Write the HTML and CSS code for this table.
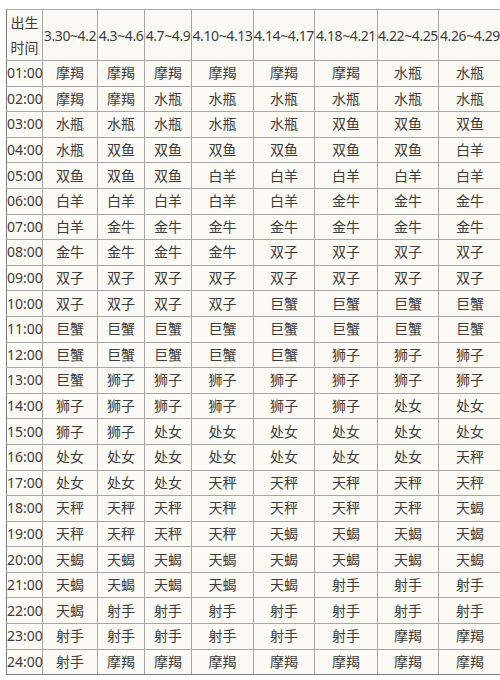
FILE: index.html
```html
<!DOCTYPE html>
<html lang="zh">
<head>
<meta charset="utf-8">
<link rel="stylesheet" href="styles.css">
</head>
<body>
<div class="wrap">
<table class="tbl">
<colgroup>
<col class="c0"><col class="c1"><col class="c2"><col class="c3"><col class="c4"><col class="c5"><col class="c6"><col class="c7"><col class="c8">
</colgroup>
<thead>
<tr class="head"><td>出生<br>时间</td><td class="date">3.30~4.2</td><td class="date">4.3~4.6</td><td class="date">4.7~4.9</td><td class="date">4.10~4.13</td><td class="date">4.14~4.17</td><td class="date">4.18~4.21</td><td class="date">4.22~4.25</td><td class="date">4.26~4.29</td></tr>
</thead>
<tbody>
<tr><td>01:00</td><td>摩羯</td><td>摩羯</td><td>摩羯</td><td>摩羯</td><td>摩羯</td><td>摩羯</td><td>水瓶</td><td>水瓶</td></tr>
<tr><td>02:00</td><td>摩羯</td><td>摩羯</td><td>水瓶</td><td>水瓶</td><td>水瓶</td><td>水瓶</td><td>水瓶</td><td>水瓶</td></tr>
<tr><td>03:00</td><td>水瓶</td><td>水瓶</td><td>水瓶</td><td>水瓶</td><td>水瓶</td><td>双鱼</td><td>双鱼</td><td>双鱼</td></tr>
<tr><td>04:00</td><td>水瓶</td><td>双鱼</td><td>双鱼</td><td>双鱼</td><td>双鱼</td><td>双鱼</td><td>双鱼</td><td>白羊</td></tr>
<tr><td>05:00</td><td>双鱼</td><td>双鱼</td><td>双鱼</td><td>白羊</td><td>白羊</td><td>白羊</td><td>白羊</td><td>白羊</td></tr>
<tr><td>06:00</td><td>白羊</td><td>白羊</td><td>白羊</td><td>白羊</td><td>白羊</td><td>金牛</td><td>金牛</td><td>金牛</td></tr>
<tr><td>07:00</td><td>白羊</td><td>金牛</td><td>金牛</td><td>金牛</td><td>金牛</td><td>金牛</td><td>金牛</td><td>金牛</td></tr>
<tr><td>08:00</td><td>金牛</td><td>金牛</td><td>金牛</td><td>金牛</td><td>双子</td><td>双子</td><td>双子</td><td>双子</td></tr>
<tr><td>09:00</td><td>双子</td><td>双子</td><td>双子</td><td>双子</td><td>双子</td><td>双子</td><td>双子</td><td>双子</td></tr>
<tr><td>10:00</td><td>双子</td><td>双子</td><td>双子</td><td>双子</td><td>巨蟹</td><td>巨蟹</td><td>巨蟹</td><td>巨蟹</td></tr>
<tr><td>11:00</td><td>巨蟹</td><td>巨蟹</td><td>巨蟹</td><td>巨蟹</td><td>巨蟹</td><td>巨蟹</td><td>巨蟹</td><td>巨蟹</td></tr>
<tr><td>12:00</td><td>巨蟹</td><td>巨蟹</td><td>巨蟹</td><td>巨蟹</td><td>巨蟹</td><td>狮子</td><td>狮子</td><td>狮子</td></tr>
<tr><td>13:00</td><td>巨蟹</td><td>狮子</td><td>狮子</td><td>狮子</td><td>狮子</td><td>狮子</td><td>狮子</td><td>狮子</td></tr>
<tr><td>14:00</td><td>狮子</td><td>狮子</td><td>狮子</td><td>狮子</td><td>狮子</td><td>狮子</td><td>处女</td><td>处女</td></tr>
<tr><td>15:00</td><td>狮子</td><td>狮子</td><td>处女</td><td>处女</td><td>处女</td><td>处女</td><td>处女</td><td>处女</td></tr>
<tr><td>16:00</td><td>处女</td><td>处女</td><td>处女</td><td>处女</td><td>处女</td><td>处女</td><td>处女</td><td>天秤</td></tr>
<tr><td>17:00</td><td>处女</td><td>处女</td><td>处女</td><td>天秤</td><td>天秤</td><td>天秤</td><td>天秤</td><td>天秤</td></tr>
<tr><td>18:00</td><td>天秤</td><td>天秤</td><td>天秤</td><td>天秤</td><td>天秤</td><td>天秤</td><td>天秤</td><td>天蝎</td></tr>
<tr><td>19:00</td><td>天秤</td><td>天秤</td><td>天秤</td><td>天秤</td><td>天蝎</td><td>天蝎</td><td>天蝎</td><td>天蝎</td></tr>
<tr><td>20:00</td><td>天蝎</td><td>天蝎</td><td>天蝎</td><td>天蝎</td><td>天蝎</td><td>天蝎</td><td>天蝎</td><td>天蝎</td></tr>
<tr><td>21:00</td><td>天蝎</td><td>天蝎</td><td>天蝎</td><td>天蝎</td><td>天蝎</td><td>射手</td><td>射手</td><td>射手</td></tr>
<tr><td>22:00</td><td>天蝎</td><td>射手</td><td>射手</td><td>射手</td><td>射手</td><td>射手</td><td>射手</td><td>射手</td></tr>
<tr><td>23:00</td><td>射手</td><td>射手</td><td>射手</td><td>射手</td><td>射手</td><td>射手</td><td>摩羯</td><td>摩羯</td></tr>
<tr><td>24:00</td><td>射手</td><td>摩羯</td><td>摩羯</td><td>摩羯</td><td>摩羯</td><td>摩羯</td><td>摩羯</td><td>摩羯</td></tr>
</tbody>
</table>
</div>
</body>
</html>
```

FILE: styles.css
```css
html, body {
  margin: 0;
  padding: 0;
  background: #ffffff;
  overflow: hidden;
}
.wrap {
  padding: 9px 0 0 6px;
  width: 600px;
}
.tbl {
  border-collapse: collapse;
  table-layout: fixed;
  width: 495px;
  background: #fcfaf4;
  font-family: "Noto Sans", "Noto Sans CJK SC", sans-serif;
  font-size: 14px;
  color: #3d3d3d;
  border-left: 1px solid #7d7d7d;
  border-top: 1px solid #7d7d7d;
  border-bottom: 1px solid #7d7d7d;
}
.c0 { width: 36px; }
.c1 { width: 55px; }
.c2 { width: 47px; }
.c3 { width: 47px; }
.c4 { width: 62px; }
.c5 { width: 61px; }
.c6 { width: 63px; }
.c7 { width: 61px; }
.c8 { width: 63px; }
.tbl td {
  border: 1px solid #a6a6a6;
  padding: 0;
  text-align: center;
  vertical-align: middle;
  white-space: nowrap;
  height: 24.6px;
  line-height: 20px;
}
.tbl td:first-child {
  border-left: 1px solid #7d7d7d;
}
.tbl .head td {
  height: 49px;
  line-height: 25px;
}
.tbl .head .date {
  letter-spacing: -0.4px;
}
.tbl tbody tr:last-child td {
  border-bottom: 1px solid #7d7d7d;
}
```
